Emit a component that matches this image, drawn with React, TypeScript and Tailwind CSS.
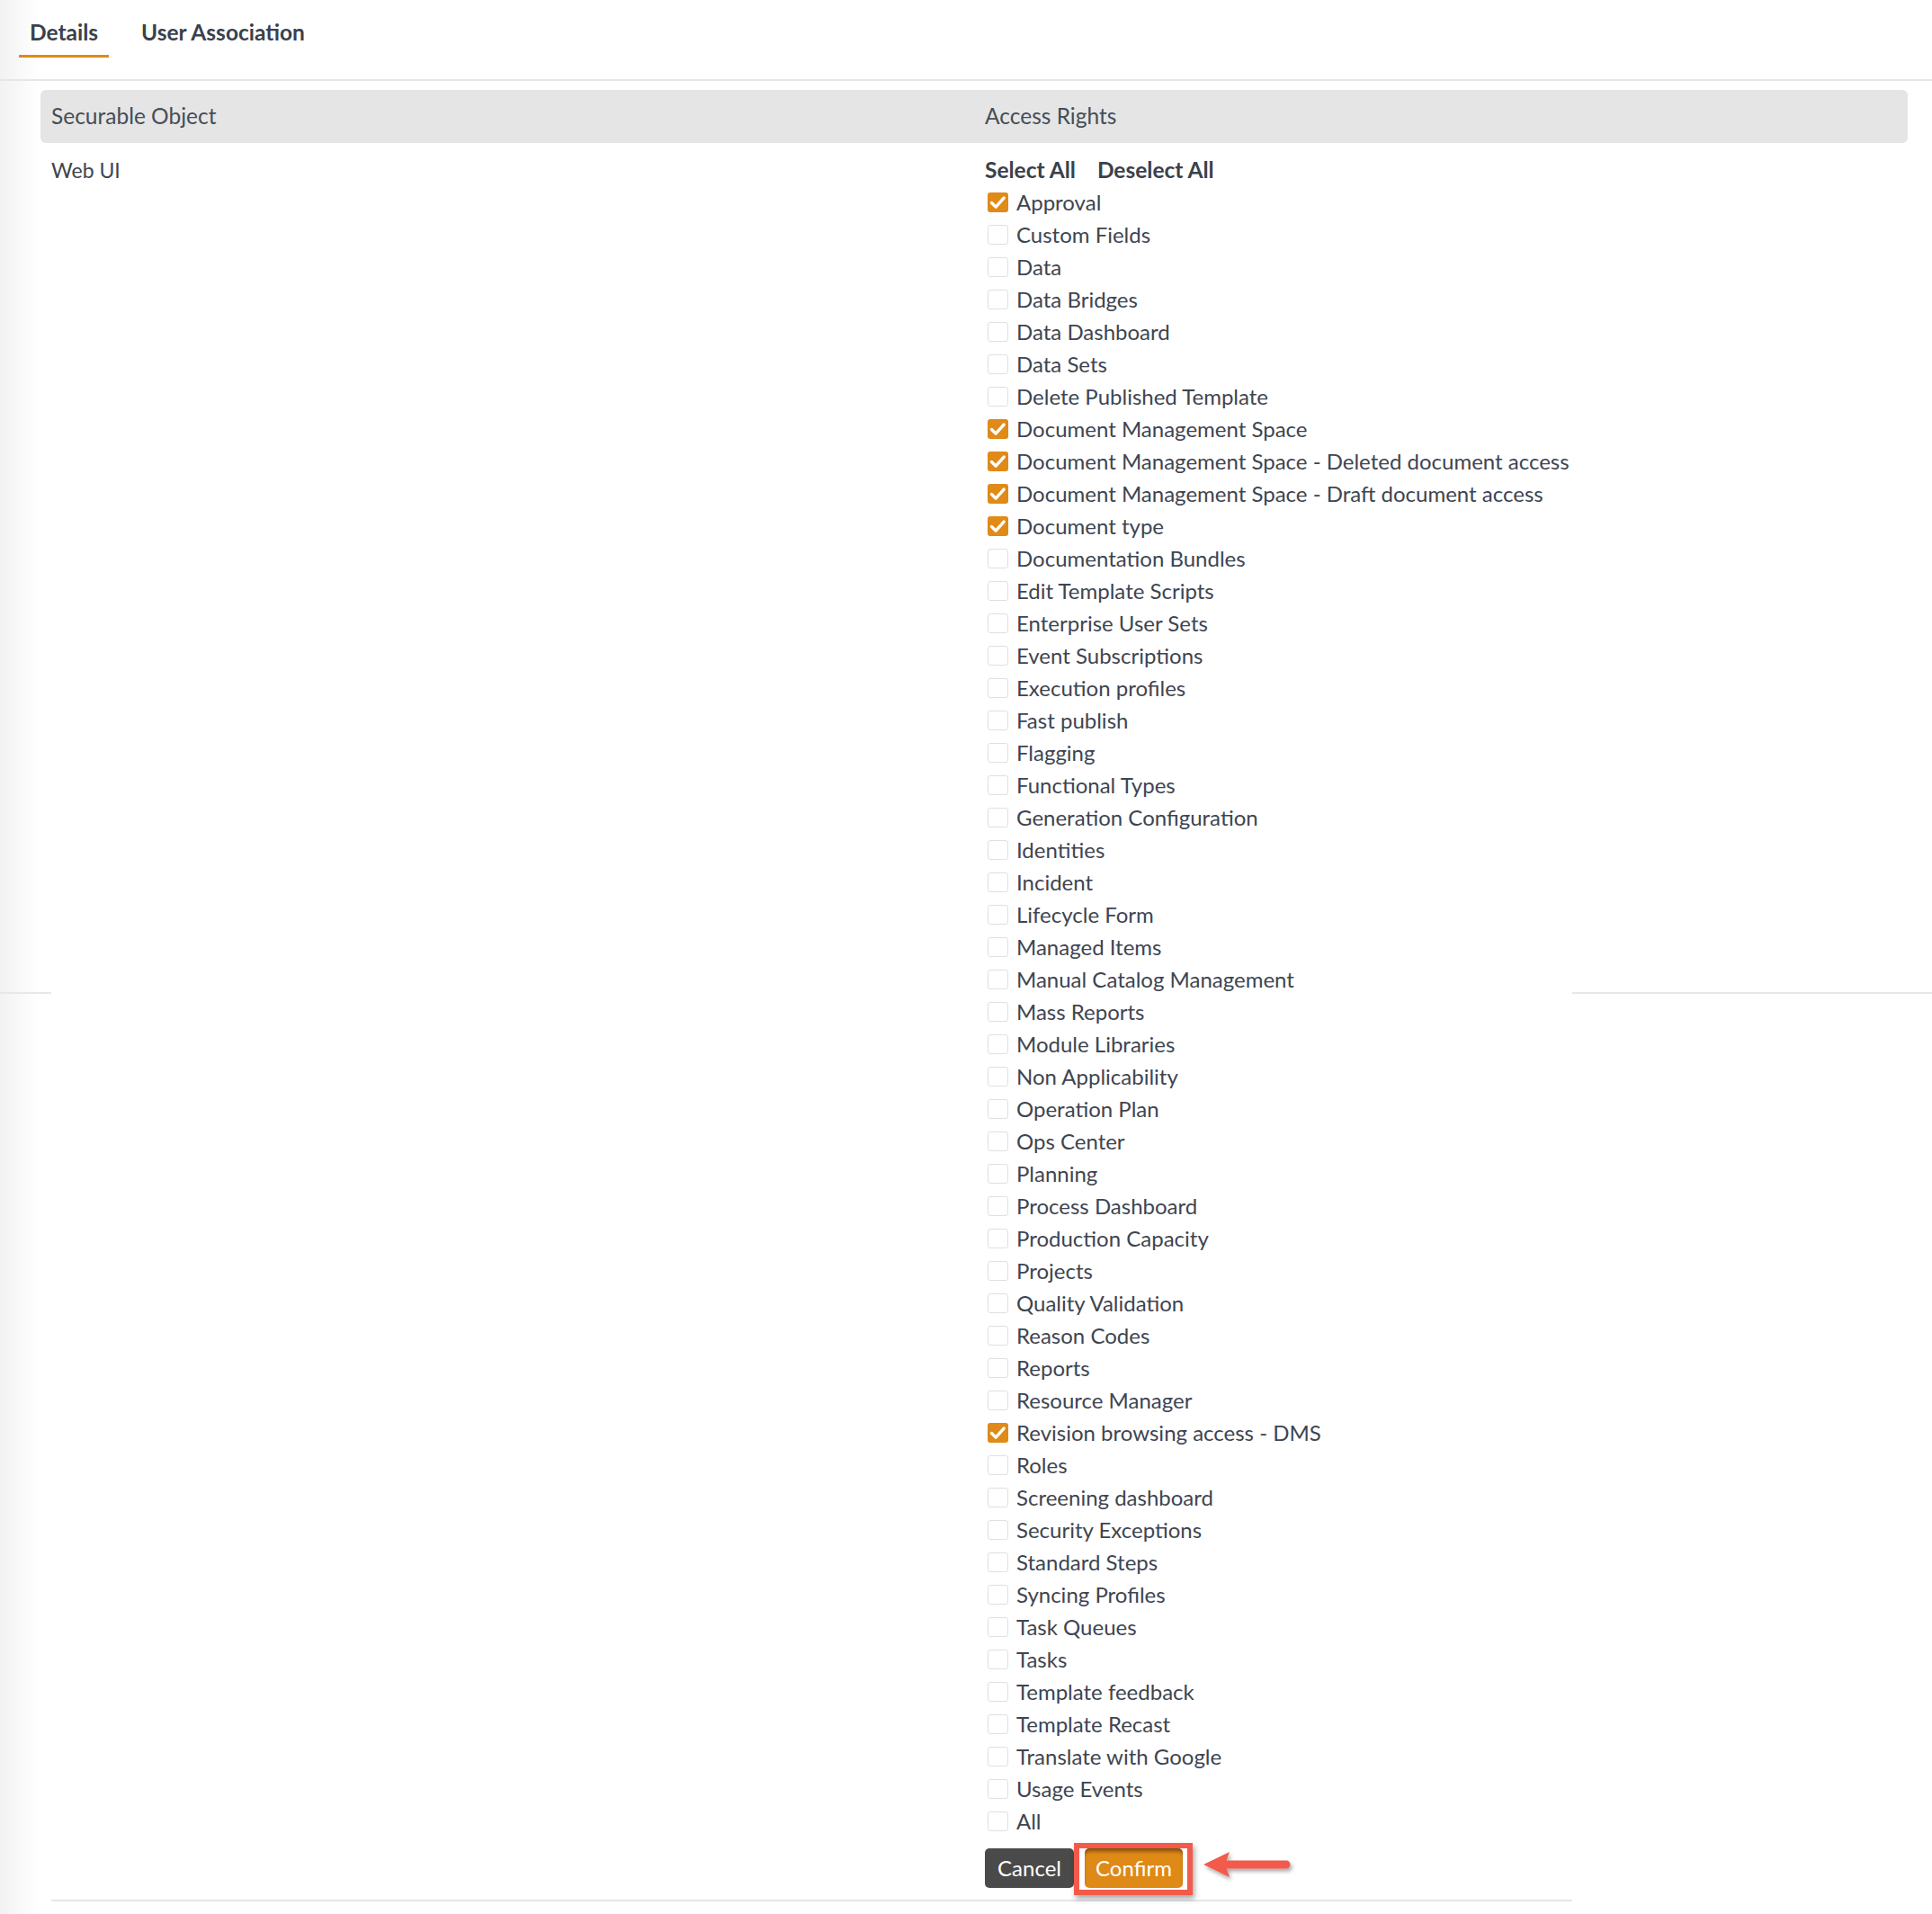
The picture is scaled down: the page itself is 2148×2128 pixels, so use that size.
import React from 'react';

// Access rights list for the Web UI securable object
const rights: { label: string; checked?: boolean }[] = [
  { label: 'Approval', checked: true },
  { label: 'Custom Fields' },
  { label: 'Data' },
  { label: 'Data Bridges' },
  { label: 'Data Dashboard' },
  { label: 'Data Sets' },
  { label: 'Delete Published Template' },
  { label: 'Document Management Space', checked: true },
  { label: 'Document Management Space - Deleted document access', checked: true },
  { label: 'Document Management Space - Draft document access', checked: true },
  { label: 'Document type', checked: true },
  { label: 'Documentation Bundles' },
  { label: 'Edit Template Scripts' },
  { label: 'Enterprise User Sets' },
  { label: 'Event Subscriptions' },
  { label: 'Execution profiles' },
  { label: 'Fast publish' },
  { label: 'Flagging' },
  { label: 'Functional Types' },
  { label: 'Generation Configuration' },
  { label: 'Identities' },
  { label: 'Incident' },
  { label: 'Lifecycle Form' },
  { label: 'Managed Items' },
  { label: 'Manual Catalog Management' },
  { label: 'Mass Reports' },
  { label: 'Module Libraries' },
  { label: 'Non Applicability' },
  { label: 'Operation Plan' },
  { label: 'Ops Center' },
  { label: 'Planning' },
  { label: 'Process Dashboard' },
  { label: 'Production Capacity' },
  { label: 'Projects' },
  { label: 'Quality Validation' },
  { label: 'Reason Codes' },
  { label: 'Reports' },
  { label: 'Resource Manager' },
  { label: 'Revision browsing access - DMS', checked: true },
  { label: 'Roles' },
  { label: 'Screening dashboard' },
  { label: 'Security Exceptions' },
  { label: 'Standard Steps' },
  { label: 'Syncing Profiles' },
  { label: 'Task Queues' },
  { label: 'Tasks' },
  { label: 'Template feedback' },
  { label: 'Template Recast' },
  { label: 'Translate with Google' },
  { label: 'Usage Events' },
  { label: 'All' },
];

function CheckBox({ checked }: { checked?: boolean }) {
  if (checked) {
    return (
      <span className="w-[23px] h-[22px] rounded-[3px] bg-[#e08a17] flex items-center justify-center shrink-0">
        <svg width="23" height="22" viewBox="0 0 23 22" fill="none">
          <path d="M4.5 11.5l4.6 4.6 9-10" stroke="#fff" strokeWidth="3.4" strokeLinecap="round" strokeLinejoin="round" />
        </svg>
      </span>
    );
  }
  return <span className="w-[23px] h-[22px] rounded-[3px] border border-[#e0e0e0] bg-white shrink-0" />;
}

function Arrow() {
  return (
    <svg width="110" height="44" viewBox="0 0 110 44" className="ml-[8px] -mt-[2px]">
      <defs>
        <filter id="arrowShadow" x="-20%" y="-50%" width="140%" height="200%">
          <feDropShadow dx="2" dy="3" stdDeviation="2" floodColor="#000" floodOpacity="0.35" />
        </filter>
      </defs>
      <g filter="url(#arrowShadow)">
        <line x1="30" y1="22" x2="96" y2="22" stroke="#f25a4b" strokeWidth="9" strokeLinecap="round" />
        <path d="M4 22 L33 8 L28 22 L33 36 Z" fill="#f25a4b" />
      </g>
    </svg>
  );
}

export default function App() {
  return (
    <div className="relative min-h-[2128px] bg-white text-[#3e4550] font-['Lato','Liberation_Sans',sans-serif]">
      {/* left panel shade */}
      <div className="absolute left-0 top-0 h-full w-[44px] bg-gradient-to-r from-[#f2f2f2] to-white pointer-events-none" />
      {/* capture seams */}
      <div className="absolute left-0 top-[1103px] w-[57px] h-[2px] bg-[#e8e8e8]" />
      <div className="absolute left-[1748px] top-[1103px] right-0 h-[2px] bg-[#e8e8e8]" />

      <div className="relative">
        {/* Tabs */}
        <div className="h-[90px] border-b-2 border-[#e6e6e6] pt-[20px] pl-[21px] flex gap-[24px]">
          <div className="flex flex-col">
            <span className="px-[12px] h-[32px] leading-[32px] text-[24.5px] font-bold text-[#3a414b]">Details</span>
            <span className="mt-[9px] h-[3px] bg-[#e08a17]" />
          </div>
          <div className="flex flex-col">
            <span className="px-[12px] h-[32px] leading-[32px] text-[24.5px] font-bold text-[#3a414b]">User Association</span>
          </div>
        </div>

        {/* Table */}
        <div className="ml-[45px] w-[2076px] mt-[10px]">
          <div className="grid grid-cols-[1038px_1fr] h-[59px] items-center bg-[#e5e5e5] rounded-[6px] text-[24.5px] text-[#464d57]">
            <div className="pl-[12px]">Securable Object</div>
            <div className="pl-[12px]">Access Rights</div>
          </div>

          <div className="grid grid-cols-[1038px_1fr] pt-[12px] text-[24px]">
            <div className="pl-[12px] leading-[36px] text-[23px]">Web UI</div>
            <div className="pl-[12px]">
              <div className="flex gap-[24px] leading-[36px] text-[24.5px] font-bold text-[#3a414b]">
                <span>Select All</span>
                <span>Deselect All</span>
              </div>
              <div className="flex flex-col">
                {rights.map((r) => (
                  <label key={r.label} className="h-[36px] flex items-center gap-[9px] pl-[3px]">
                    <CheckBox checked={r.checked} />
                    <span className="leading-[36px]">{r.label}</span>
                  </label>
                ))}
              </div>
              <div className="flex items-start mt-[6px]">
                <button className="mt-[6px] w-[99px] h-[44px] shrink-0 rounded-[5px] bg-[#4a4a4a] text-white text-[24px]">Cancel</button>
                <div className="shrink-0 border-[6px] border-[#f25a4b] pl-[6px] pr-[5px] pb-[2px] shadow-[2px_4px_6px_rgba(0,0,0,0.35)]">
                  <button className="w-[109px] h-[44px] rounded-[5px] bg-[#df8916] text-white text-[24px] shadow-[inset_0_5px_4px_-2px_rgba(0,0,0,0.45)]">Confirm</button>
                </div>
                <div className="mt-[4px]">
                  <Arrow />
                </div>
              </div>
            </div>
          </div>
          <div className="ml-[12px] w-[1691px] h-[2px] bg-[#e6e6e6] mt-[5px]" />
        </div>
      </div>
    </div>
  );
}
